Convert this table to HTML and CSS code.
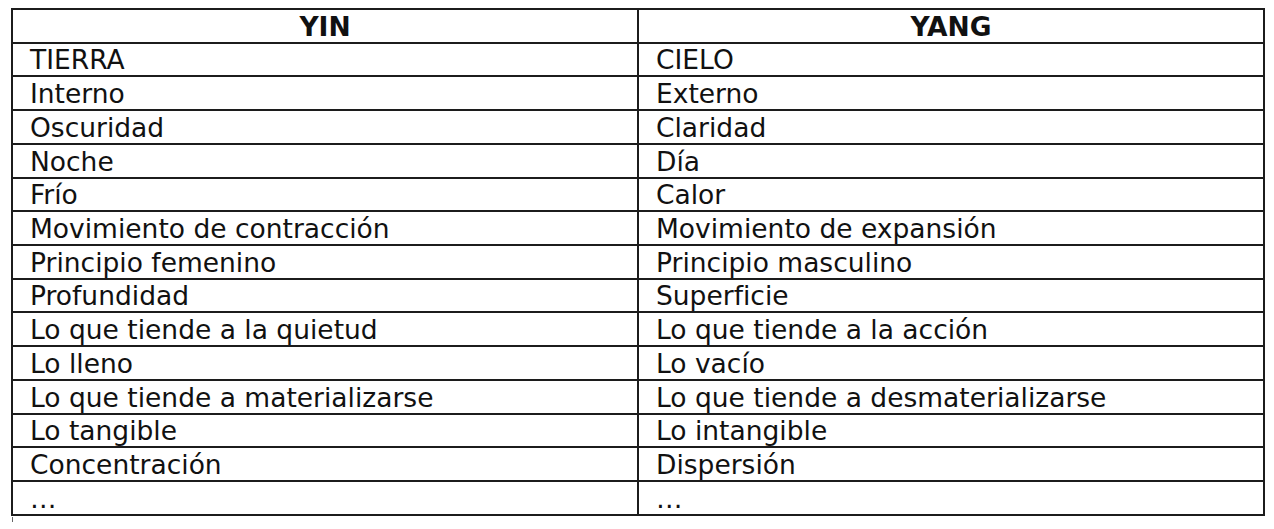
FILE: index.html
```html
<!DOCTYPE html>
<html lang="es">
<head>
<meta charset="utf-8">
<title>Yin Yang</title>
<link rel="stylesheet" href="styles.css">
</head>
<body>
<table class="yy">
  <colgroup><col class="c1"><col class="c2"></colgroup>
  <thead>
    <tr><th>YIN</th><th>YANG</th></tr>
  </thead>
  <tbody>
    <tr><td>TIERRA</td><td>CIELO</td></tr>
    <tr><td>Interno</td><td>Externo</td></tr>
    <tr><td>Oscuridad</td><td>Claridad</td></tr>
    <tr><td>Noche</td><td>Día</td></tr>
    <tr><td>Frío</td><td>Calor</td></tr>
    <tr><td>Movimiento de contracción</td><td>Movimiento de expansión</td></tr>
    <tr><td>Principio femenino</td><td>Principio masculino</td></tr>
    <tr><td>Profundidad</td><td>Superficie</td></tr>
    <tr><td>Lo que tiende a la quietud</td><td>Lo que tiende a la acción</td></tr>
    <tr><td>Lo lleno</td><td>Lo vacío</td></tr>
    <tr><td>Lo que tiende a materializarse</td><td>Lo que tiende a desmaterializarse</td></tr>
    <tr><td>Lo tangible</td><td>Lo intangible</td></tr>
    <tr><td>Concentración</td><td>Dispersión</td></tr>
    <tr class="last"><td>…</td><td>…</td></tr>
  </tbody>
</table>
<div class="tick"></div>
</body>
</html>
```

FILE: styles.css
```css
html, body {
  margin: 0;
  background: #ffffff;
}
body {
  padding: 8px 0 0 11px;
  font-family: "DejaVu Sans", Verdana, sans-serif;
  color: #111111;
}
.yy {
  width: 1254px;
  border-collapse: collapse;
  table-layout: fixed;
  font-size: 26.5px;
}
.yy .c1, .yy .c2 {
  width: 50%;
}
.yy th, .yy td {
  border: 2px solid #1c1c1c;
  height: 33.73px;
  padding: 0 16px 0 17px;
  box-sizing: border-box;
  line-height: 30px;
  vertical-align: bottom;
  text-align: left;
  white-space: nowrap;
  font-weight: normal;
}
.yy th {
  text-align: center;
  font-weight: bold;
  padding: 0;
}
.yy .last td {
  height: 34.3px;
}
.tick {
  width: 1px;
  height: 5px;
  margin: 1px 0 0 1px;
  background: #666666;
}
```
